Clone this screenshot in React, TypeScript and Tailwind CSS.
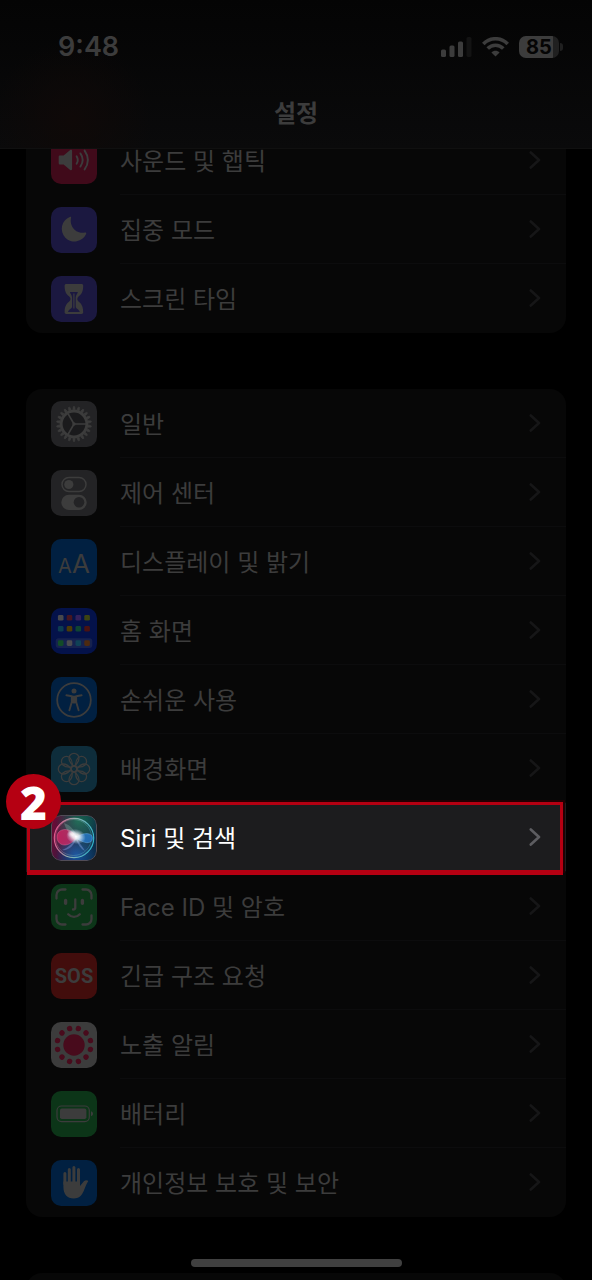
import type { ReactNode } from "react";
import { clsx } from "clsx";

const GLYPH = "#3c3c3c";

const Glyph = ({ children }: { children: ReactNode }) => (
  <svg viewBox="0 0 46 46" className="size-full" aria-hidden="true">
    {children}
  </svg>
);

const SoundIcon = () => (
  <Glyph>
    <path
      d="M9 17.5h3.6l6.6-5.4c.9-.7 1.900-.3 1.900.8v18.2c0 1.100-1 1.500-1.900.8l-6.600-5.400H9c-.8 0-1.300-.5-1.300-1.300v-6.400c0-.8.5-1.300 1.300-1.300z"
      fill={GLYPH}
    />
    <g fill="none" stroke={GLYPH} strokeWidth="1.9" strokeLinecap="round">
      <path d="M25.6 18.2c1.5 2.4 1.5 5.2 0 7.6" />
      <path d="M29.4 15.4c2.9 4.2 2.9 9 0 13.2" />
      <path d="M33.6 12.6c4.2 6 4.2 12.8 0 18.8" />
    </g>
  </Glyph>
);

const MoonIcon = () => (
  <Glyph>
    <path
      d="M18.8 10c.9-.4 1.6.2 1.2 1.1A12 12 0 0 0 34 25.600c1-.3 1.500.4 1.100 1.300A12.700 12.700 0 1 1 18.800 10z"
      fill={GLYPH}
    />
  </Glyph>
);

const HourglassIcon = () => (
  <Glyph>
    <path
      d="M15.300 8h15.200c1 0 1.700.7 1.700 1.700 0 6.800-2.200 8.700-4.700 10.800-1.600 1.400-1.600 3.600 0 5 2.500 2.100 4.700 4 4.700 10.800 0 1-.7 1.700-1.700 1.700H15.300c-1 0-1.700-.7-1.700-1.700 0-6.800 2.200-8.700 4.700-10.800 1.600-1.400 1.600-3.600 0-5-2.500-2.100-4.700-4-4.700-10.800 0-1 .7-1.700 1.700-1.700z"
      fill={GLYPH}
    />
    <path
      d="M18.900 15.900h8c-.3 1.900-2.200 3-2.200 5.600v9c0 2.300 3.300 2.600 4.100 5.400H17c.8-2.800 4.100-3.100 4.100-5.400v-9c0-2.600-1.900-3.700-2.200-5.600z"
      fill="#1b1840"
    />
    <path d="M22.900 17.500v15" stroke={GLYPH} strokeWidth="1.200" />
  </Glyph>
);

const teeth = Array.from({ length: 22 }, (_, i) => (i * 360) / 22);

const GearIcon = () => (
  <Glyph>
    {teeth.map((deg) => (
      <path
        key={deg}
        d="M21.800 8.800 22.400 5.600h1.200l.6 3.200z"
        fill={GLYPH}
        stroke={GLYPH}
        strokeWidth=".7"
        transform={`rotate(${deg} 23 23)`}
      />
    ))}
    <circle cx="23" cy="23" r="12.800" fill="#1a1a1c" stroke={GLYPH} strokeWidth="2.800" />
    <path
      d="M23 23h12M23 23l-6-10.400M23 23l-6 10.400"
      fill="none"
      stroke={GLYPH}
      strokeWidth="1.700"
    />
    <circle cx="23" cy="23" r="1.700" fill={GLYPH} />
  </Glyph>
);

const ControlCenterIcon = () => (
  <Glyph>
    <rect x="11" y="7.500" width="24" height="14" rx="7" fill="none" stroke={GLYPH} strokeWidth="1.500" />
    <circle cx="17.800" cy="14.500" r="4.600" fill={GLYPH} />
    <rect x="10.300" y="24.700" width="25.400" height="15.300" rx="7.600" fill={GLYPH} />
    <circle cx="28" cy="32.300" r="5.300" fill="#232325" />
  </Glyph>
);

const DisplayIcon = () => (
  <span className="flex items-baseline pt-1 font-['Inter',sans-serif] leading-none">
    <span className="text-xl leading-none">A</span>
    <span className="text-[26px] leading-none">A</span>
  </span>
);

const apps = [
  ["#48484c", "#471620", "#33205a", "#3c4412"],
  ["#0c3c50", "#4c3a05", "#0e4432", "#4a1212"],
  ["#124b28", "#4b4b4f", "#0f4156", "#4d2a10"],
];

const HomeScreenIcon = () => (
  <Glyph>
    <rect x="4.700" y="30.300" width="36.600" height="9.700" rx="3" fill="#16224f" />
    {apps.map((row, y) =>
      row.map((fill, x) => (
        <rect
          key={fill}
          x={6.9 + x * 8.8}
          y={[7, 18, 32.3][y]}
          width="5.600"
          height="5.600"
          rx="1.400"
          fill={fill}
        />
      )),
    )}
  </Glyph>
);

const AccessibilityIcon = () => (
  <Glyph>
    <circle cx="23" cy="23" r="16.800" fill="none" stroke={GLYPH} strokeWidth="1.800" />
    <circle cx="23" cy="14" r="2.500" fill={GLYPH} />
    <path
      d="M15.400 18.300l5.400 1v5.700l-2.400 8.300M30.600 18.300l-5.400 1v5.700l2.400 8.300"
      fill="none"
      stroke={GLYPH}
      strokeWidth="1.900"
      strokeLinecap="round"
      strokeLinejoin="round"
    />
    <path d="M20.300 18.800h5.400V26l-2.200.6h-1l-2.200-.6z" fill={GLYPH} />
  </Glyph>
);

const petals = Array.from({ length: 8 }, (_, i) => i * 45);

const WallpaperIcon = () => (
  <Glyph>
    <g fill="none" stroke={GLYPH} strokeWidth="1.300">
      {petals.map((deg) => (
        <path
          key={deg}
          d="M23 20.200c-3.200-2.400-5-4.900-5-7.900a5 5 0 0 1 10 0c0 3-1.800 5.500-5 7.900z"
          transform={`rotate(${deg} 23 23)`}
        />
      ))}
      <circle cx="23" cy="23" r="2.800" />
    </g>
  </Glyph>
);

const SiriIcon = () => (
  <Glyph>
    <defs>
      <linearGradient id="siri-bg" x1="0" y1=".4" x2="1" y2=".6">
        <stop offset="0" stopColor="#6a0c36" />
        <stop offset=".4" stopColor="#2c1c40" />
        <stop offset=".7" stopColor="#0c3345" />
        <stop offset="1" stopColor="#0b2c4a" />
      </linearGradient>
      <radialGradient id="siri-green" cx=".6" cy=".12" r=".5">
        <stop offset="0" stopColor="#17664f" />
        <stop offset="1" stopColor="#17664f" stopOpacity="0" />
      </radialGradient>
      <radialGradient id="siri-blue" cx=".55" cy=".9" r=".45">
        <stop offset="0" stopColor="#1450a0" />
        <stop offset="1" stopColor="#1450a0" stopOpacity="0" />
      </radialGradient>
      <linearGradient id="siri-ring" x1="0" y1=".4" x2="1" y2=".6">
        <stop offset="0" stopColor="#e0568c" />
        <stop offset=".45" stopColor="#8fb0ad" />
        <stop offset="1" stopColor="#2fb2c8" />
      </linearGradient>
      <radialGradient id="siri-glow">
        <stop offset="0" stopColor="#fff" />
        <stop offset=".35" stopColor="#fff" stopOpacity=".8" />
        <stop offset="1" stopColor="#cfe6ff" stopOpacity="0" />
      </radialGradient>
    </defs>
    <rect x=".5" y=".5" width="45" height="45" rx="9.500" fill="url(#siri-bg)" />
    <rect x=".5" y=".5" width="45" height="45" rx="9.500" fill="url(#siri-green)" />
    <rect x=".5" y=".5" width="45" height="45" rx="9.500" fill="url(#siri-blue)" stroke="#514c57" />
    <circle cx="23" cy="23" r="19.700" fill="#fff" fillOpacity=".05" stroke="url(#siri-ring)" strokeWidth="1.200" />
    <circle cx="22.500" cy="22.500" r="18" fill="none" stroke="url(#siri-ring)" strokeWidth=".7" opacity=".5" />
    <path
      d="M26 22.500c-3.500-5-7-8-12-8-5.200.1-8.300 3.600-8 8.300.4 4.700 4 7.600 8.500 7.200 4.500-.5 8-3.500 11.500-7.500z"
      fill="#e0286a"
      fillOpacity=".7"
      stroke="#f480b0"
      strokeWidth=".6"
      strokeOpacity=".6"
    />
    <path
      d="M24 22.500c4.500-2.200 8-4 12-3.900 3.500.1 5.500 2 5.500 4.700 0 2.900-2.500 4.700-5.700 4.400-4-.4-7.400-2.600-11.800-5.200z"
      fill="#2a80dc"
      fillOpacity=".7"
      stroke="#7cc4ff"
      strokeWidth=".6"
      strokeOpacity=".6"
    />
    <path d="M25 22c-3 6-8 11-14 13 6 1 12-4 14-11 2 6 5 10 9 12-2-4-6-8-9-14z" fill="#9fb8ff" opacity=".35" />
    <path d="M13 8c6 2 11 7 13 15-7-2-11-8-13-15z" fill="#bff5dd" opacity=".22" />
    <ellipse cx="25" cy="21.500" rx="10" ry="7.500" fill="url(#siri-glow)" transform="rotate(15 25 21.500)" />
    <ellipse cx="21" cy="19" rx="5" ry="4" fill="url(#siri-glow)" opacity=".7" />
  </Glyph>
);

const FaceIdIcon = () => (
  <Glyph>
    <g fill="none" stroke={GLYPH} strokeWidth="2.300" strokeLinecap="round">
      <path d="M5.500 14.500V11A5.500 5.500 0 0 1 11 5.500h3.500M31.500 5.500H35a5.500 5.500 0 0 1 5.500 5.500v3.500M40.500 31.500V35a5.500 5.500 0 0 1-5.500 5.500h-3.500M14.500 40.500H11A5.500 5.500 0 0 1 5.500 35v-3.500" />
      <path d="M17.200 30.300c3.300 3.500 8.300 3.500 11.600 0" />
      <path d="M24.300 15.500v8c0 1.300-.8 2-2.300 2" />
    </g>
    <path d="M14.600 16.500v2.800M31.400 16.500v2.800" stroke={GLYPH} strokeWidth="3.400" strokeLinecap="round" />
  </Glyph>
);

const SosIcon = () => <span className="font-['Roboto',sans-serif] text-xl font-bold">SOS</span>;

const dots = Array.from({ length: 12 }, (_, i) => 15 + i * 30);

const ExposureIcon = () => (
  <Glyph>
    <g fill="#480b1c">
      <circle cx="23" cy="23" r="10.700" />
      {dots.map((deg) => (
        <circle key={deg} cx="23" cy="6" r="2.700" transform={`rotate(${deg} 23 23)`} />
      ))}
    </g>
  </Glyph>
);

const BatteryIcon = () => (
  <Glyph>
    <rect x="6" y="15" width="32.300" height="15.600" rx="4.500" fill="none" stroke={GLYPH} strokeWidth="1.200" />
    <rect x="9" y="17.600" width="26.400" height="10.400" rx="1.800" fill={GLYPH} />
    <path d="M40 20.300c1.300.4 2 1.400 2 2.500s-.7 2.100-2 2.500z" fill={GLYPH} />
  </Glyph>
);

const HandIcon = () => (
  <Glyph>
    <path
      d="M13.900 24V13.500M18.300 23V9.500M22.900 23V7.600M27.500 24V9.500"
      stroke={GLYPH}
      strokeWidth="3"
      strokeLinecap="round"
    />
    <path
      d="M12.400 21.500h16.600v4.600l3.900-4.900c1.500-1.500 3.600-1.300 4.400-.1-1.900 2.500-3.100 6.500-4.800 10.400-2 4.600-5 6.900-9.600 6.900-6.900 0-10.500-4.200-10.500-11.400z"
      fill={GLYPH}
    />
  </Glyph>
);

interface Setting {
  label: string;
  tile: string;
  icon: ReactNode;
  step?: number;
}

const focusSettings: Setting[] = [
  { label: "사운드 및 햅틱", tile: "bg-[#400a1a]", icon: <SoundIcon /> },
  { label: "집중 모드", tile: "bg-[#1b1840]", icon: <MoonIcon /> },
  { label: "스크린 타임", tile: "bg-[#1b1840]", icon: <HourglassIcon /> },
];

const generalSettings: Setting[] = [
  { label: "일반", tile: "bg-[#232325]", icon: <GearIcon /> },
  { label: "제어 센터", tile: "bg-[#232325]", icon: <ControlCenterIcon /> },
  { label: "디스플레이 및 밝기", tile: "bg-[#012041]", icon: <DisplayIcon /> },
  { label: "홈 화면", tile: "bg-[#04124a]", icon: <HomeScreenIcon /> },
  { label: "손쉬운 사용", tile: "bg-[#012041]", icon: <AccessibilityIcon /> },
  { label: "배경화면", tile: "bg-[#0e2d3b]", icon: <WallpaperIcon /> },
  { label: "Siri 및 검색", tile: "", icon: <SiriIcon />, step: 2 },
  { label: "Face ID 및 암호", tile: "bg-[#0c3518]", icon: <FaceIdIcon /> },
  { label: "긴급 구조 요청", tile: "bg-[#420d0c]", icon: <SosIcon /> },
  { label: "노출 알림", tile: "bg-[#3c3c3c]", icon: <ExposureIcon /> },
  { label: "배터리", tile: "bg-[#0c3518]", icon: <BatteryIcon /> },
  { label: "개인정보 보호 및 보안", tile: "bg-[#012041]", icon: <HandIcon /> },
];

const StatusBar = () => (
  <div className="flex h-[94px] items-center justify-between pr-[29px] pl-[58px]">
    <time className="font-['Inter',sans-serif] text-[27px] font-semibold">9:48</time>
    <div className="flex items-center gap-[10px]">
      <svg viewBox="0 0 31 20" className="h-5 w-[31px]" fill={GLYPH} aria-hidden="true">
        <rect x="0" y="12.500" width="5" height="7.500" rx="1.500" />
        <rect x="8.500" y="8.500" width="5" height="11.500" rx="1.500" />
        <rect x="17" y="4.500" width="5" height="15.500" rx="1.500" />
        <rect x="25.500" y="0" width="5" height="20" rx="1.500" fill="#131313" />
      </svg>
      <svg viewBox="0 0 27 20" className="h-5 w-[27px]" aria-hidden="true">
        <g fill="none" stroke={GLYPH} strokeWidth="3.600">
          <path d="M1.300 6.900c6.800-6.900 17.600-6.900 24.400 0" />
          <path d="M5.700 11.600c4.300-4.400 11.300-4.400 15.600 0" />
        </g>
        <path d="M13.500 19.600l-4.100-4.200c2.300-2.100 5.900-2.100 8.200 0z" fill={GLYPH} />
      </svg>
      <div className="flex items-center gap-px">
        <span className="flex h-[22px] w-10 items-center justify-center rounded-[7px] bg-linear-to-r from-[#3c3c3c] from-85% to-[#202020] to-85% font-['Inter',sans-serif] text-xl font-bold text-[#050505]">
          85
        </span>
        <span className="h-2 w-[3px] rounded-r-full bg-[#202020]" />
      </div>
    </div>
  </div>
);

const SettingRow = ({ label, tile, icon, step }: Setting) => (
  <li className="group relative">
    <a
      href="#"
      className={clsx(
        "flex h-[69px] items-center gap-[23px] pl-[25px]",
        step && "bg-[#1c1c1e] text-white",
      )}
    >
      <span
        className={clsx(
          "flex size-[46px] shrink-0 items-center justify-center overflow-hidden rounded-[10px]",
          tile,
        )}
      >
        {icon}
      </span>
      <span className="flex h-full flex-1 items-center justify-between border-b border-[#0c0c0d] pr-[25px] group-last:border-transparent">
        <span className="pt-1">{label}</span>
        <svg
          viewBox="0 0 12 18"
          className={clsx("h-[18px] w-3", step ? "text-[#5d5d61]" : "text-[#161617]")}
          aria-hidden="true"
        >
          <path
            d="M1.800 1.500 10 9l-8.200 7.500"
            fill="none"
            stroke="currentColor"
            strokeWidth="2.600"
            strokeLinecap="round"
            strokeLinejoin="round"
          />
        </svg>
      </span>
    </a>
    {step && (
      <>
        <span className="pointer-events-none absolute -top-px right-[3px] -bottom-[3px] left-px z-10 border-3 border-b-5 border-[#b50012] shadow-[2px_-2px_0_#220003]" />
        <span className="absolute -top-[29px] -left-5 z-20 flex size-[55px] items-center justify-center rounded-full bg-[#b50012] font-['Open_Sans',sans-serif] text-[46px] leading-none font-extrabold text-white">
          {step}
        </span>
      </>
    )}
  </li>
);

const SettingGroup = ({ items }: { items: Setting[] }) => (
  <ul className="rounded-2xl bg-[#070707]">
    {items.map((item) => (
      <SettingRow key={item.label} {...item} />
    ))}
  </ul>
);

export default function App() {
  return (
    <div className="h-screen overflow-hidden bg-black font-['Inter','Noto_Sans_CJK_KR',sans-serif] text-2xl text-[#3c3c3c]">
      <header className="relative z-10 h-[149px] border-b border-[#101010] bg-[#070708] bg-[radial-gradient(circle_at_72px_120px,#0f0908,transparent_80px),linear-gradient(#040404,#0a0a0b)]">
        <StatusBar />
        <h1 className="pt-1 text-center font-bold">설정</h1>
      </header>

      <main className="-mt-[23px] flex flex-col gap-14 px-[26px]">
        <SettingGroup items={focusSettings} />
        <SettingGroup items={generalSettings} />
        <div className="h-[69px] rounded-2xl bg-[#070707]" />
      </main>

      <div className="fixed inset-x-0 bottom-[13px] z-10 mx-auto h-2 w-[211px] rounded-full bg-[#404040]" />
    </div>
  );
}
